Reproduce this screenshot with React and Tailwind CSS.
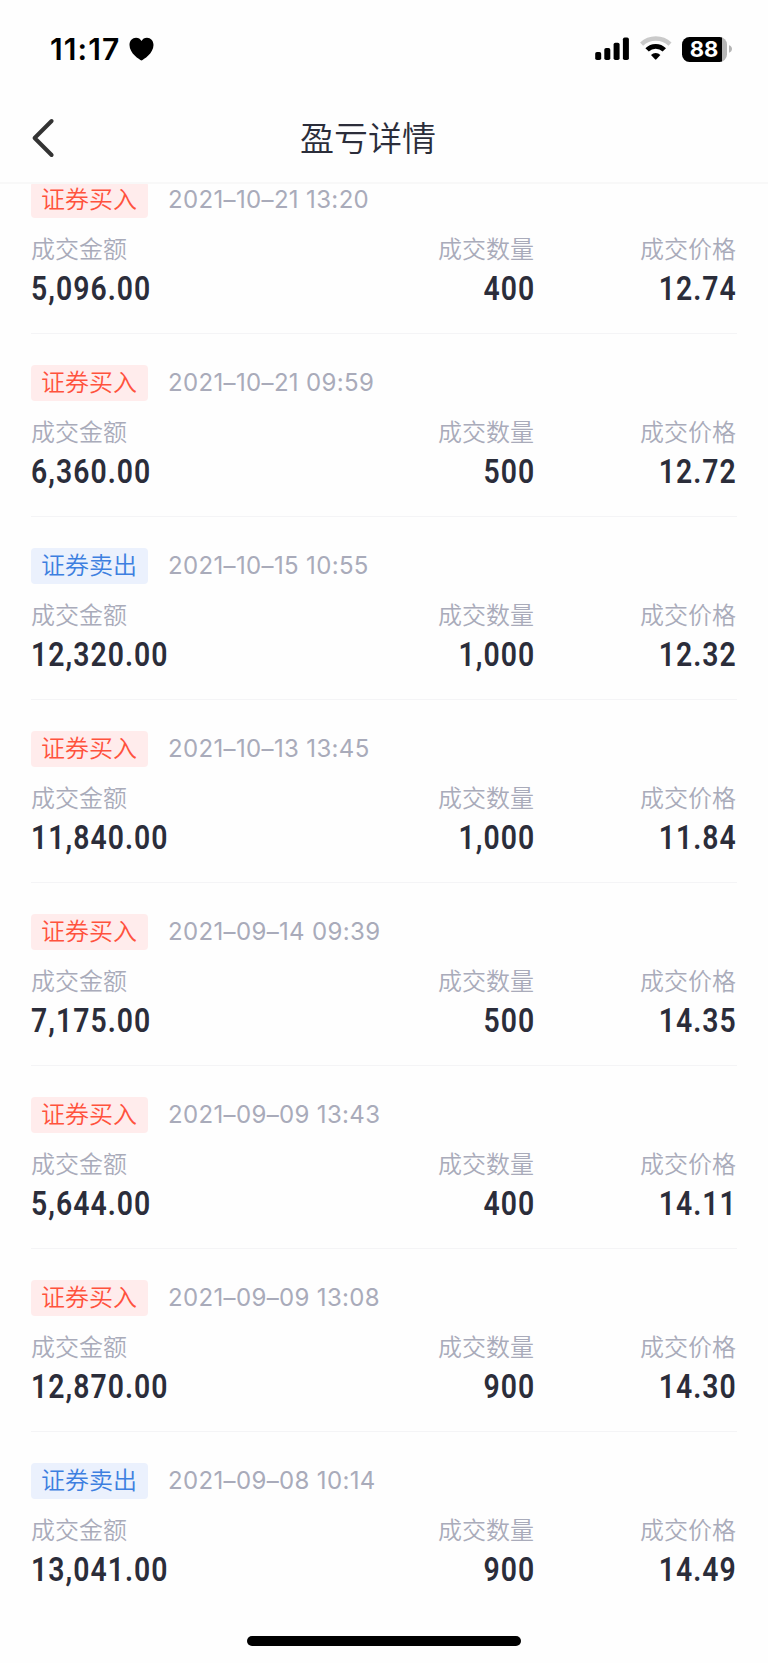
import clsx from 'clsx';

const TRADES = [
  {type: 'buy', time: '2021–10–21 13:20', amount: '5,096.00', quantity: '400', price: '12.74'},
  {type: 'buy', time: '2021–10–21 09:59', amount: '6,360.00', quantity: '500', price: '12.72'},
  {type: 'sell', time: '2021–10–15 10:55', amount: '12,320.00', quantity: '1,000', price: '12.32'},
  {type: 'buy', time: '2021–10–13 13:45', amount: '11,840.00', quantity: '1,000', price: '11.84'},
  {type: 'buy', time: '2021–09–14 09:39', amount: '7,175.00', quantity: '500', price: '14.35'},
  {type: 'buy', time: '2021–09–09 13:43', amount: '5,644.00', quantity: '400', price: '14.11'},
  {type: 'buy', time: '2021–09–09 13:08', amount: '12,870.00', quantity: '900', price: '14.30'},
  {type: 'sell', time: '2021–09–08 10:14', amount: '13,041.00', quantity: '900', price: '14.49'},
];

export default function App() {
  return (
    <div className="flex h-[1663px] w-[768px] flex-col overflow-hidden bg-[#fefefe] font-['Inter','Noto_Sans_CJK_SC',sans-serif]">
      <StatusBar />
      <Header />
      <main className="flex-1 overflow-hidden">
        <div className="-mt-[33px] pr-[31px] pl-[31px]">
          {TRADES.map((trade) => (
            <TradeRow key={trade.time} trade={trade} />
          ))}
        </div>
      </main>
      <footer className="flex h-[31px] shrink-0 justify-center">
        <div className="mt-[4px] h-[10px] w-[274px] rounded-full bg-black" />
      </footer>
    </div>
  );
}

function StatusBar() {
  return (
    <div className="flex h-[98px] shrink-0 items-center justify-between pr-[35px] pl-[50px]">
      <div className="flex items-center gap-[9px]">
        <span className="text-[30px] leading-none font-semibold tracking-[1.1px] text-black">
          11:17
        </span>
        <svg width="25" height="24" viewBox="0 0 25 24">
          <path d="M12.5 23.5C10.5 22.5 0.5 16.5 0.5 8C0.5 3.6 3.4 0.7 7 0.7C9.5 0.7 11.4 1.9 12.5 4C13.6 1.9 15.5 0.7 18 0.7C21.6 0.7 24.5 3.6 24.5 8C24.5 16.5 14.5 22.5 12.5 23.5Z" />
        </svg>
      </div>
      <div className="flex items-center">
        <svg width="35" height="26" viewBox="0 0 35 26">
          <rect x="0.2" y="16" width="6" height="8" rx="1.8" />
          <rect x="9.3" y="12" width="6" height="12" rx="1.8" />
          <rect x="18.6" y="6.8" width="6" height="17.2" rx="1.8" />
          <rect x="27.9" y="1.4" width="6" height="22.6" rx="1.8" />
        </svg>
        <svg className="ml-[9px]" width="34" height="26" viewBox="0 0 34 26">
          <path
            d="M2.6 8.2A20.5 20.5 0 0 1 31 8.2"
            fill="none"
            stroke="#cacaca"
            strokeWidth="4.4"
          />
          <path
            d="M8.1 13.9A12.2 12.2 0 0 1 25.3 13.9"
            fill="none"
            stroke="#000"
            strokeWidth="4.8"
          />
          <path d="M12 19A6.8 6.8 0 0 1 21.4 19L17.4 23.3Q16.7 24 16 23.3Z" />
        </svg>
        <div className="ml-[9px] flex h-[25px] w-[45px] items-center overflow-hidden rounded-[7.5px] bg-[linear-gradient(90deg,#000_40px,#b5b5b5_40px)]">
          <span className="w-[44px] text-center text-[22px] leading-none font-bold text-white">
            88
          </span>
        </div>
        <svg className="ml-[2px]" width="4" height="8" viewBox="0 0 4 8">
          <path d="M0 0.3C4 1.5 4 6.5 0 7.7Z" fill="#b5b5b5" />
        </svg>
      </div>
    </div>
  );
}

function Header() {
  return (
    <header className="flex h-[86px] shrink-0 items-center border-b-2 border-[#f8f8f8] pl-[31px]">
      <svg
        className="-mt-[5px]"
        width="25"
        height="40"
        viewBox="0 0 25 40"
        fill="none"
        stroke="#333"
        strokeWidth="4"
        strokeLinecap="round"
        strokeLinejoin="round"
      >
        <path d="M20.6 3L3.6 20L20.6 37" />
      </svg>
      <h1 className="-mt-[3px] ml-[244px] text-[34px] leading-none font-[350] text-[#2b2d3a]">
        盈亏详情
      </h1>
    </header>
  );
}

function TradeRow({trade}) {
  const sell = trade.type === 'sell';

  return (
    <article className="h-[183px] border-b border-[#f4f4f6] pt-[31px] last:border-b-0">
      <div className="flex h-[36px] items-center">
        <span
          className={clsx(
            'flex h-[36px] w-[117px] items-center rounded-[4px] pl-[10px] text-[24px] leading-none font-[350]',
            sell ? 'bg-[#ebf1fd] text-[#3d7fe0]' : 'bg-[#ffecec] text-[#ff523d]',
          )}
        >
          {sell ? '证券卖出' : '证券买入'}
        </span>
        <time className="ml-[20px] text-[24px] leading-none font-normal tracking-[0.35px] text-[#a9abba]">
          {trade.time}
        </time>
      </div>
      <div className="mt-[14px] flex">
        <Field label="成交金额" value={trade.amount} />
        <Field label="成交数量" value={trade.quantity} right />
        <Field label="成交价格" value={trade.price} right />
      </div>
    </article>
  );
}

function Field({label, value, right}) {
  return (
    <div
      className={clsx(
        'flex flex-col',
        right ? 'w-[202px] items-end' : 'w-[302px] items-start',
      )}
    >
      <span
        className={clsx(
          'text-[24px] leading-[36px] font-[350] text-[#a9abba]',
          right && 'mr-px',
        )}
      >
        {label}
      </span>
      <span
        className={clsx(
          "scale-x-[0.86] font-['Roboto',sans-serif] text-[33px] leading-[42px] font-semibold tracking-[1.2px] text-[#2b2d3a]",
          right ? 'origin-right' : 'origin-left',
        )}
      >
        {value}
      </span>
    </div>
  );
}
